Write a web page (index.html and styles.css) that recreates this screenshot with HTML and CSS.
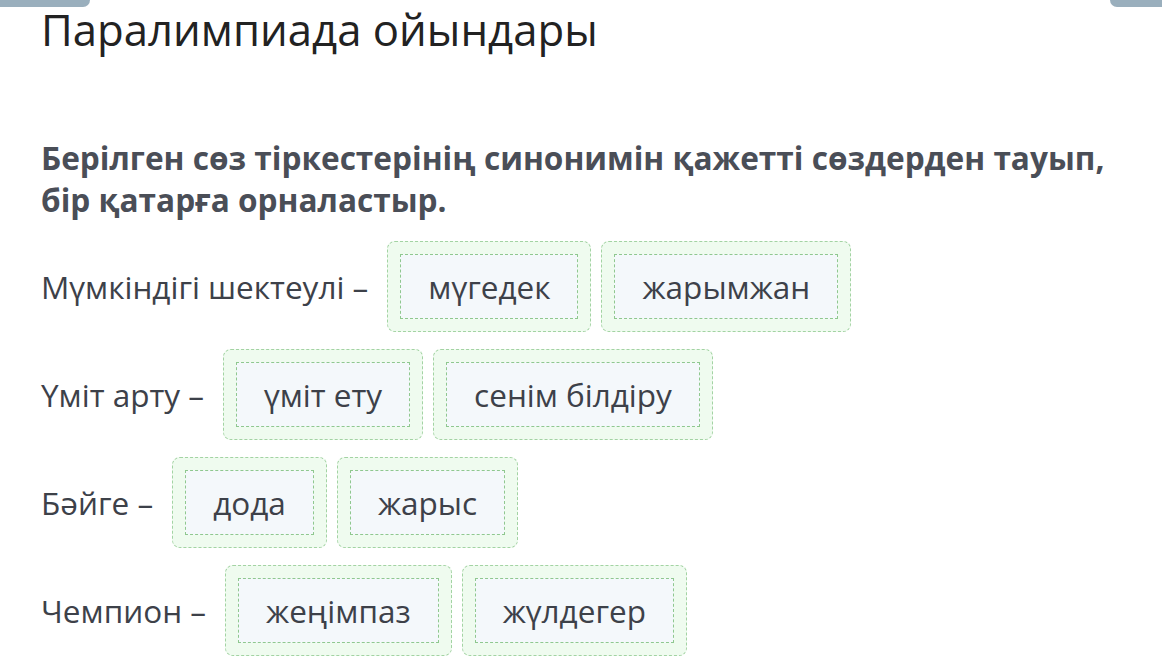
FILE: index.html
```html
<!DOCTYPE html>
<html lang="kk">

<head>
    <meta charset="UTF-8">
    <meta name="viewport" content="width=device-width, initial-scale=1.0">
    <title>Паралимпиада ойындары</title>
    <link rel="stylesheet" href="styles.css">
</head>

<body>
    <div class="top-bar">
        <span class="tab tab-left"></span>
        <span class="tab tab-right"></span>
    </div>
    <div class="container">
        <h1 class="title">Паралимпиада ойындары</h1>
        <p class="task">Берілген сөз тіркестерінің синонимін қажетті сөздерден тауып, бір қатарға орналастыр.</p>

        <div class="rows">
            <div class="row">
                <span class="label">Мүмкіндігі шектеулі –</span>
                <div class="slot"><div class="word">мүгедек</div></div>
                <div class="slot"><div class="word">жарымжан</div></div>
            </div>
            <div class="row">
                <span class="label">Үміт арту –</span>
                <div class="slot"><div class="word">үміт ету</div></div>
                <div class="slot"><div class="word">сенім білдіру</div></div>
            </div>
            <div class="row">
                <span class="label">Бәйге –</span>
                <div class="slot"><div class="word">дода</div></div>
                <div class="slot"><div class="word">жарыс</div></div>
            </div>
            <div class="row">
                <span class="label">Чемпион –</span>
                <div class="slot"><div class="word">жеңімпаз</div></div>
                <div class="slot"><div class="word">жүлдегер</div></div>
            </div>
        </div>
    </div>
</body>

</html>
```

FILE: styles.css
```css
body {
    font-family: "Open Sans", "Noto Sans", sans-serif;
    background-color: #ffffff;
    color: #3d4149;
    margin: 0;
}

.top-bar {
    display: flex;
    justify-content: space-between;
    height: 7px;
}

.tab {
    display: block;
    background-color: #9aafbd;
}

.tab-left {
    width: 90px;
    border-bottom-right-radius: 8px;
}

.tab-right {
    width: 52px;
    border-bottom-left-radius: 8px;
}

.container {
    padding: 0 41px;
}

.title {
    margin: 0;
    font-size: 43.7px;
    font-weight: 400;
    line-height: 44px;
    color: #222222;
}

.task {
    margin: 86px 0 20px;
    font-size: 31.6px;
    font-weight: 700;
    line-height: 42px;
    color: #4a4e57;
}

.rows {
    display: flex;
    flex-direction: column;
    gap: 17px;
}

.row {
    display: flex;
    align-items: center;
    gap: 10px;
}

.label {
    font-size: 31.5px;
    margin-right: 9px;
}

.slot {
    padding: 12px;
    border: 1px dashed #a3d3a3;
    border-radius: 8px;
    background-color: #effbef;
}

.word {
    padding: 0 27px;
    line-height: 63px;
    font-size: 31.5px;
    border: 1px dashed #8fc88f;
    background-color: #f4f8fb;
}
```
